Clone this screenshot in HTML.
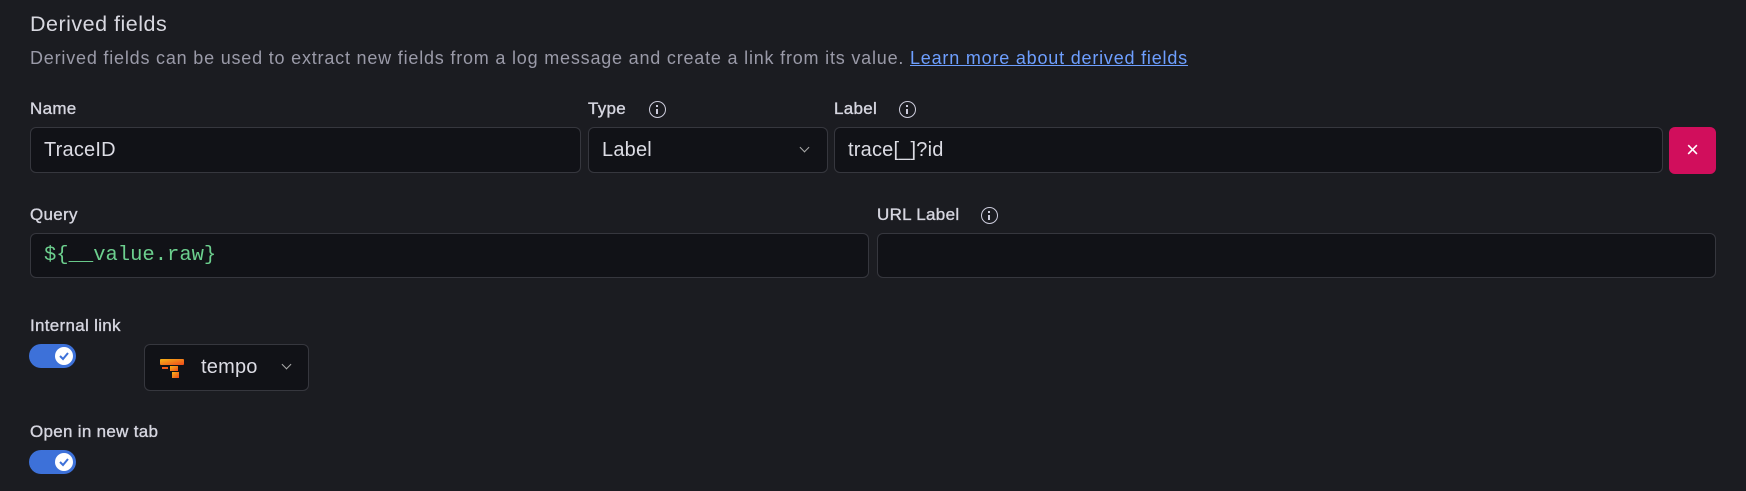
<!DOCTYPE html>
<html><head><meta charset="utf-8"><style>
*{box-sizing:border-box;margin:0;padding:0}
body{width:1746px;height:491px;background:#1b1c21;font-family:"Liberation Sans",sans-serif;color:#ccccdc;position:relative;overflow:hidden}
.a{position:absolute;white-space:nowrap}
.lbl{font-size:17px;font-weight:normal;color:#d6d6e0;line-height:20px;letter-spacing:0.3px;-webkit-text-stroke:0.35px #d6d6e0}
.in{position:absolute;background:#111217;border:1px solid rgba(204,204,220,0.2);border-radius:6px;font-size:20px;color:#dcdce4;padding-left:13px;display:flex;align-items:center;letter-spacing:0.2px}
.info{position:absolute;width:17px;height:17px;border:1.6px solid #ccccdc;border-radius:50%}
.info:before{content:"";position:absolute;left:5.6px;top:3px;width:2.2px;height:2px;background:#ccccdc}
.info:after{content:"";position:absolute;left:5.6px;top:6.5px;width:2.2px;height:5px;background:#ccccdc}
.tog{position:absolute;width:47px;height:24px;border-radius:12px;background:#3d71d9}
.tog i{position:absolute;right:3px;top:3px;width:18px;height:18px;border-radius:50%;background:#fff}
.tog svg{position:absolute;left:3px;top:4px}
.chev{position:absolute;width:8px;height:8px;border-right:1.6px solid #aaa;border-bottom:1.6px solid #aaa;transform:rotate(45deg)}
</style></head><body>
<div class="a" style="left:30px;top:12px;font-size:21.5px;color:#d8d8e0;letter-spacing:0.5px">Derived fields</div>
<div class="a" style="left:30px;top:48px;font-size:18px;letter-spacing:0.8px;color:#9a9aa8">Derived fields can be used to extract new fields from a log message and create a link from its value. <span style="color:#6e9fff;text-decoration:underline">Learn more about derived fields</span></div>

<div class="a lbl" style="left:30px;top:99px">Name</div>
<div class="a lbl" style="left:588px;top:99px">Type</div><div class="info" style="left:649px;top:101px"></div>
<div class="a lbl" style="left:834px;top:99px">Label</div><div class="info" style="left:899px;top:101px"></div>

<div class="in" style="left:30px;top:127px;width:551px;height:46px">TraceID</div>
<div class="in" style="left:588px;top:127px;width:240px;height:46px">Label<div class="chev" style="left:212px;top:16px;width:7px;height:7px"></div></div>
<div class="in" style="left:834px;top:127px;width:829px;height:46px">trace[_]?id</div>
<div class="a" style="left:1669px;top:127px;width:47px;height:47px;background:#d10e5c;border-radius:6px;color:#fff;font-size:22px;text-align:center;line-height:46px">×</div>

<div class="a lbl" style="left:30px;top:205px">Query</div>
<div class="a lbl" style="left:877px;top:205px">URL Label</div><div class="info" style="left:981px;top:207px"></div>
<div class="in" style="left:30px;top:233px;width:839px;height:45px;font-family:'Liberation Mono',monospace;color:#6ccf8e;font-size:20.5px;letter-spacing:0">${__value.raw}</div>
<div class="in" style="left:877px;top:233px;width:839px;height:45px"></div>

<div class="a lbl" style="left:30px;top:316px">Internal link</div>
<div class="tog" style="left:29px;top:344px"><i><svg width="12" height="10" viewBox="0 0 12 10"><path d="M2 5l3 3 5-6" stroke="#3d71d9" stroke-width="2" fill="none"/></svg></i></div>
<div class="in" style="left:144px;top:344px;width:165px;height:47px;padding-left:14px">
<svg width="26" height="22" viewBox="0 0 26 22" style="margin-right:16px"><defs><linearGradient id="g" x1="0" y1="0" x2="1" y2="1"><stop offset="0" stop-color="#f7b418"/><stop offset="1" stop-color="#f04a1c"/></linearGradient></defs><rect x="1" y="2" width="24" height="6" rx="1" fill="url(#g)"/><rect x="11" y="9" width="8" height="5" fill="url(#g)"/><rect x="13" y="15" width="7" height="6" fill="url(#g)"/><rect x="3" y="10" width="6" height="2" fill="#f05a1c"/></svg>tempo<div class="chev" style="left:138px;top:16px;width:7px;height:7px"></div></div>

<div class="a lbl" style="left:30px;top:422px">Open in new tab</div>
<div class="tog" style="left:29px;top:450px"><i><svg width="12" height="10" viewBox="0 0 12 10"><path d="M2 5l3 3 5-6" stroke="#3d71d9" stroke-width="2" fill="none"/></svg></i></div>
</body></html>
